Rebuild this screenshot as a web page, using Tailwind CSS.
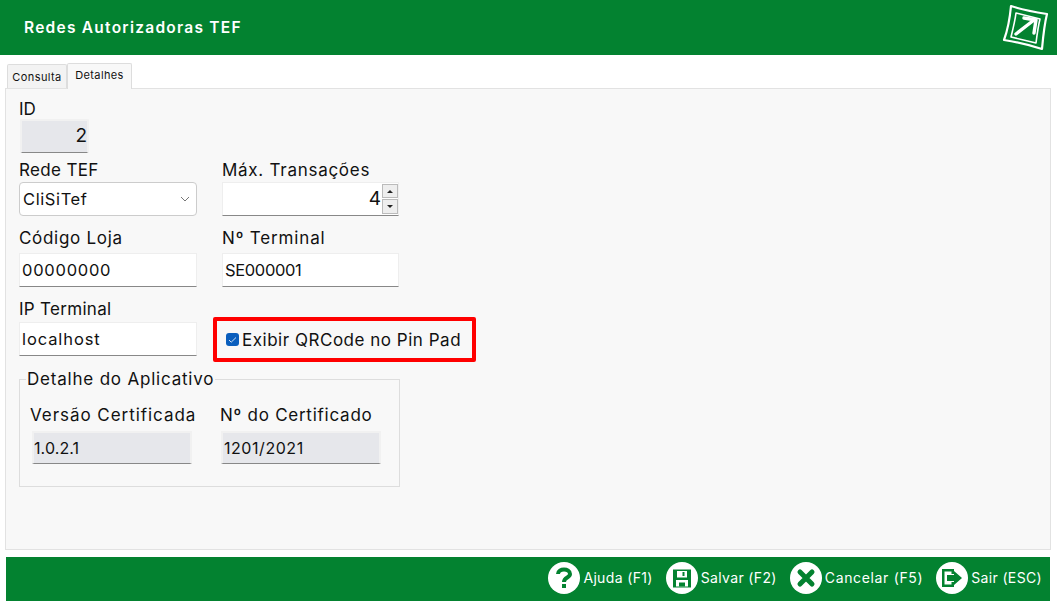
<!DOCTYPE html>
<html lang="pt-BR">
<head>
<meta charset="utf-8">
<title>Redes Autorizadoras TEF</title>
<script src="https://cdn.jsdelivr.net/npm/@tailwindcss/browser@4"></script>
</head>
<body class="w-[1057px] h-[606px] overflow-hidden bg-white text-[#111] font-['Inter','Liberation_Sans',sans-serif] text-[17px] leading-[20px]">
<header class="h-[55px] bg-[#038230] flex items-center justify-between pl-[24px] pr-[8px]">
  <h1 class="text-white font-semibold text-[15.5px] tracking-[1.25px]">Redes Autorizadoras TEF</h1>
  <svg width="47" height="47" viewBox="0 0 47 47" fill="none" stroke="#fff" stroke-linejoin="round"><path d="M9 2 C21 6 33 8 45 10 C42 22 41 34 40 45 C28 41 15 38 2 36 C6 25 8 13 9 2Z" stroke-width="2.2"/><path d="M14 9 C22 11 30 13 38 15 C36 23 35 31 34 39 C26 37 17 35 9 33 C11 25 13 17 14 9Z" stroke-width="1.6"/><path d="M14 30 L32 16 M22 14 L34 16 L32 29" stroke-width="3.4" stroke-linecap="round"/></svg>
</header>
<div class="h-[33px] pl-[7px] pt-[8px] flex items-end">
  <div class="h-[24px] w-[60px] bg-[#f3f3f3] border border-b-0 border-[#ddd] rounded-t-[2px] text-[11px] tracking-[0.4px] flex items-center justify-center">Consulta</div>
  <div class="h-[26px] w-[65px] bg-[#f8f8f8] border border-b-0 border-[#ddd] rounded-t-[2px] text-[11px] tracking-[0.35px] pb-[4px] flex items-center justify-center relative top-[1px] z-10">Detalhes</div>
</div>
<main class="mx-[5px] w-[1046px] h-[462px] bg-[#f8f8f8] border border-[#e2e2e2] pl-[13px] pt-[10px]">
  <div class="h-[20px]">ID</div>
  <div class="ml-[1px] w-[69px] h-[34px] bg-[#e6e7eb] border-2 border-[#f1f1f1] border-b-[#888] border-b rounded-[2px] text-right leading-[30px] text-[19px]">2</div>
  <div class="flex mt-[7px]">
    <div class="w-[203px]">
      <div class="h-[22px] tracking-[0.35px]">Rede TEF</div>
      <div class="w-[178px] h-[34px] bg-white border border-[#ccc] rounded-[4px] flex items-center justify-between pl-[3px] pr-[6px] text-[16.5px] tracking-[0.6px]"><span>CliSiTef</span><svg width="10" height="6" viewBox="0 0 10 6" fill="none" stroke="#777"><path d="M1 1l4 4 4-4"/></svg></div>
    </div>
    <div>
      <div class="h-[22px] tracking-[0.73px]">Máx. Transações</div>
      <div class="w-[177px] h-[34px] bg-white border border-[#eee] border-b-[#888] flex items-center justify-end text-[19px] relative">
        <span class="pr-[17px]">4</span>
        <div class="absolute right-0 top-0 w-[16px] h-[32px] flex flex-col gap-[1px] pt-[1px]">
          <div class="h-[14px] bg-[#eee] border border-[#bbb] flex items-center justify-center"><span class="w-0 h-0 border-x-[3px] border-x-transparent border-b-[3px] border-b-[#222]"></span></div>
          <div class="h-[15px] bg-[#eee] border border-[#bbb] flex items-center justify-center"><span class="w-0 h-0 border-x-[3px] border-x-transparent border-t-[3px] border-t-[#222]"></span></div>
        </div>
      </div>
    </div>
  </div>
  <div class="flex mt-[12px]">
    <div class="w-[203px]">
      <div class="h-[25px] tracking-[0.7px]">Código Loja</div>
      <div class="w-[178px] h-[34px] bg-white border border-[#eee] border-b-[#888] pl-[2px] leading-[32px] text-[16.5px] tracking-[0.75px]">00000000</div>
    </div>
    <div>
      <div class="h-[25px] tracking-[0.85px]">Nº Terminal</div>
      <div class="w-[177px] h-[34px] bg-white border border-[#eee] border-b-[#888] pl-[2px] leading-[32px] text-[16.5px] tracking-[-0.35px]">SE000001</div>
    </div>
  </div>
  <div class="flex mt-[12px]">
    <div class="w-[194px]">
      <div class="h-[23px] tracking-[0.3px]">IP Terminal</div>
      <div class="w-[178px] h-[34px] bg-white border border-[#eee] border-b-[#888] pl-[2px] leading-[32px] text-[16.5px] tracking-[0.9px]">localhost</div>
    </div>
    <div class="mt-[18px] w-[263px] h-[45px] border-[4px] border-[#f00] rounded-[2px] flex items-center pl-[9px] gap-[3px] text-[17px] tracking-[0.52px]">
      <span class="w-[13px] h-[13px] bg-[#0a5ebd] rounded-[3px] flex items-center justify-center"><svg width="9" height="8" viewBox="0 0 9 8" fill="none" stroke="#cfe0f5" stroke-width="1"><path d="M1 4l2.200 2.200L8 1.500"/></svg></span>
      <span>Exibir QRCode no Pin Pad</span>
    </div>
  </div>
  <fieldset class="mt-[5px] w-[381px] h-[120px] border border-[#ddd] pl-[6px]">
    <legend class="tracking-[0.8px] h-[24px] leading-[24px] px-[1px]">Detalhe do Aplicativo</legend>
    <div class="flex mt-[14px] pl-[4px]">
      <div class="w-[190px]">
        <div class="h-[26px] tracking-[0.95px] whitespace-nowrap">Versão Certificada</div>
        <div class="ml-[2px] w-[160px] h-[33px] bg-[#e6e7eb] border-2 border-[#f1f1f1] border-b-[#888] border-b leading-[30px] text-[16px] tracking-[0.1px]">1.0.2.1</div>
      </div>
      <div>
        <div class="h-[26px] tracking-[0.75px] whitespace-nowrap">Nº do Certificado</div>
        <div class="ml-[1px] w-[160px] h-[33px] bg-[#e6e7eb] border-2 border-[#f1f1f1] border-b-[#888] border-b pl-[1px] leading-[30px] text-[16px] tracking-[0.55px]">1201/2021</div>
      </div>
    </div>
  </fieldset>
</main>
<footer class="mt-[7px] ml-[6px] w-[1044px] h-[44px] bg-[#038230] flex items-center justify-end pr-[8px] pb-[2px] text-white text-[14px] tracking-[0.35px]">
  <div class="flex items-center gap-[3px] mr-[13px]">
    <span class="w-[32px] h-[32px] rounded-full bg-white flex items-center justify-center"><svg width="16" height="22" viewBox="0 0 16 22" fill="none" stroke="#038230" stroke-width="4"><path d="M2 7 C2 1 14 1 14 7 C14 11 8 10 8 15"/><path d="M8 17v4"/></svg></span>
    <span>Ajuda (F1)</span>
  </div>
  <div class="flex items-center gap-[3px] mr-[13px]">
    <span class="w-[32px] h-[32px] rounded-full bg-white flex items-center justify-center"><svg width="20" height="21" viewBox="0 0 20 20"><path d="M1 1h18v18H1z" fill="#038230"/><path d="M5 2.500h10v6.500H5z" fill="#fff"/><path d="M10.500 3.500h2v4h-2z" fill="#038230"/><path d="M4 11.500h12V18H4z" fill="#fff"/><path d="M7 14h6v4H7z" fill="#038230"/></svg></span>
    <span class="tracking-[0.35px]">Salvar (F2)</span>
  </div>
  <div class="flex items-center gap-[3px] mr-[13px]">
    <span class="w-[32px] h-[32px] rounded-full bg-white flex items-center justify-center"><svg width="20" height="20" viewBox="0 0 20 20" fill="none" stroke="#038230" stroke-width="5" stroke-linecap="round"><path d="M4 4l12 12M16 4L4 16"/></svg></span>
    <span class="tracking-[0.65px]">Cancelar (F5)</span>
  </div>
  <div class="flex items-center gap-[3px]">
    <span class="w-[32px] h-[32px] rounded-full bg-white flex items-center justify-center"><svg width="22" height="20" viewBox="0 0 22 20"><path d="M1 1h12v5h-2.500V3.500H3.500v13h7V14H13v5H1z" fill="#038230"/><path d="M6 7h7V3l8 7-8 7v-4H6z" fill="#038230"/></svg></span>
    <span>Sair (ESC)</span>
  </div>
</footer>
</body>
</html>
